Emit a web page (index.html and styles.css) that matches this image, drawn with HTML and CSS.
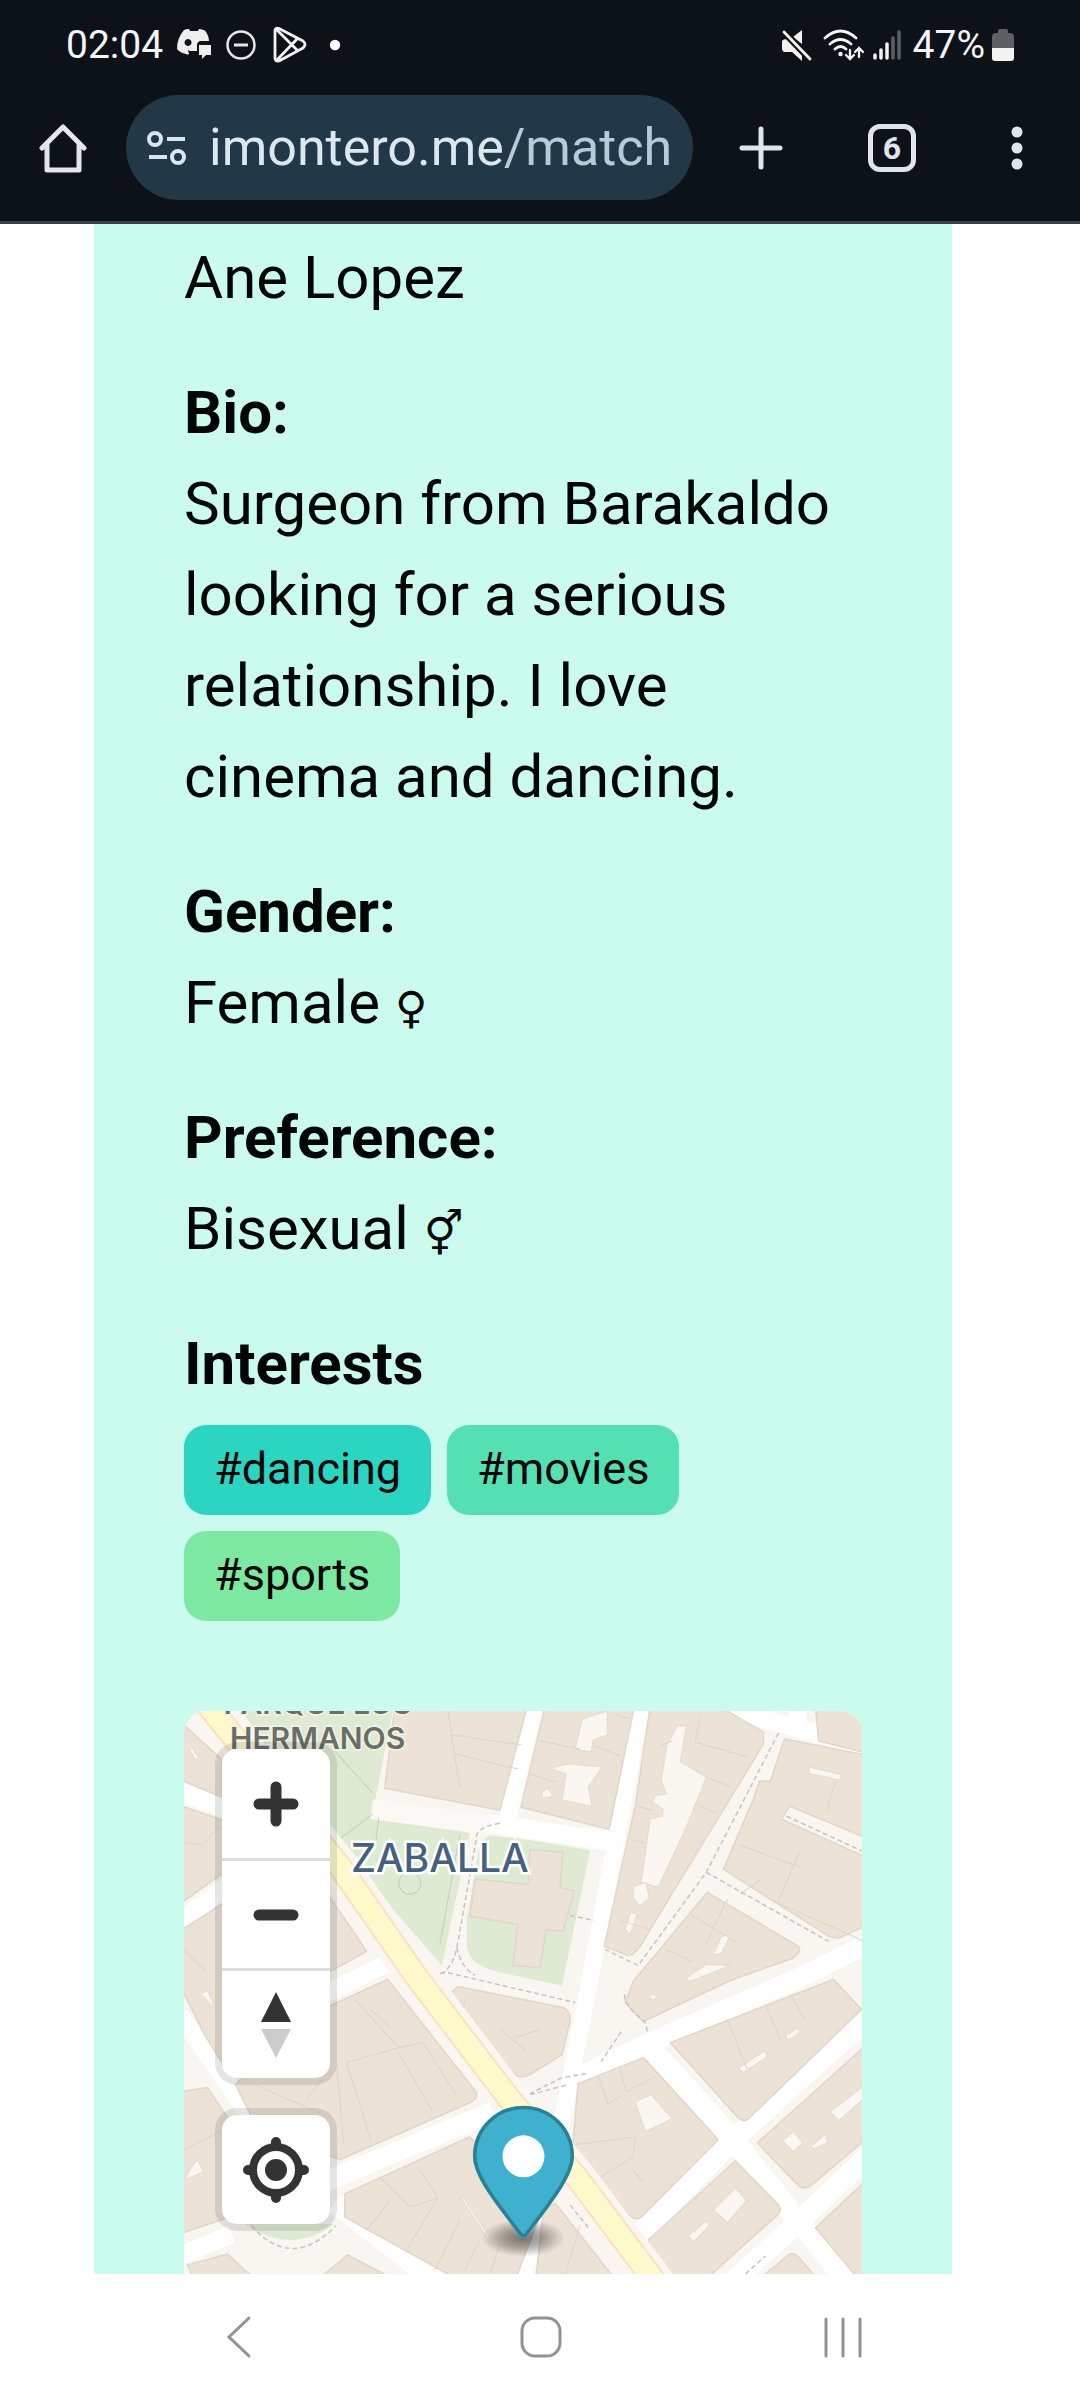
FILE: index.html
```html
<!DOCTYPE html>
<html lang="en">
<head>
<meta charset="utf-8">
<meta name="viewport" content="width=device-width, initial-scale=1">
<title>Match</title>
<link rel="stylesheet" href="styles.css">
</head>
<body>
<header class="chrome">
  <div class="status">
    <div class="status-group">
      <span class="clock">02:04</span>
      <svg width="36" height="36" viewBox="0 0 36 36"><path fill="#eee" fill-rule="evenodd" d="M8 3q3-1.500 5-1l1 2h8l1-2q3 0 6 1.500Q33 9 33 14h-9q-3 1-3 4v6h-7l-2-1 1 4q-1 1-3 0-6-1-9-5Q1 11 8 3zM12 12a3.500 3.500 0 1 0 .1 0z"/><path fill="#eee" d="M23 18h12v10h-5l-4 4v-4h-3z"/></svg>
      <svg width="32" height="32" viewBox="0 0 32 32" fill="none" stroke="#e6e6e6"><circle cx="16" cy="16" r="13.500" stroke-width="2.500"/><path d="M9 16h14" stroke-width="3"/></svg>
      <svg class="play" width="36" height="38" viewBox="0 0 36 38" fill="none" stroke="#f2f2f2" stroke-width="2.800" stroke-linejoin="round"><path d="M3 5q0-4 4-2.500L31 15q4 3 0 7L7 35q-4 1-4-3zM4 3l22 22M4 35l22-23"/></svg>
      <svg width="12" height="12" viewBox="0 0 12 12"><circle cx="6" cy="6" r="5.200" fill="#fff"/></svg>
    </div>
    <div class="status-group status-right">
      <svg width="32" height="34" viewBox="0 0 32 34"><path fill="#f4f0ee" d="M22 2v14L13 9zM2 13q1-2 5-2l15 14v8l-10-9H5q-3 0-3-4z"/><path d="M4 4l26 27" stroke="#0d1218" stroke-width="7"/><path d="M4 4l26 27" stroke="#f4f0ee" stroke-width="2.800" stroke-linecap="round"/></svg>
      <svg class="wifi" width="42" height="34" viewBox="0 0 42 34" fill="none" stroke="#f4f4f4" stroke-width="2.800" stroke-linecap="round"><path d="M2 10q15.500-14 31 0M7 16q10.500-9 21 0M12 21q5.500-5 11 0"/><circle cx="17.500" cy="26" r="2.200" fill="#f4f4f4" stroke="none"/><path d="M27 22v9m-4-4l4 4 4-4M36 29v-9m-4 4l4-4 4 4" stroke-width="2.300"/></svg>
      <svg class="signal" width="30" height="34" viewBox="0 0 30 34" stroke-width="3.500" stroke-linecap="round"><path d="M3 27v3M9 22v8M15 16v14" stroke="#f2f2f2"/><path d="M21 10v20M27 4v26" stroke="#5b5f62"/></svg>
      <span class="battery-text">47%</span>
      <svg width="22" height="34" viewBox="0 0 22 34"><path d="M6 3q0-2 2-2h6q2 0 2 2v2h2q4 0 4 4v11H0V9q0-4 4-4h2z" fill="#5c6063"/><path d="M0 20h22v10q0 3-3 3H3q-3 0-3-3z" fill="#f2f2f2"/></svg>
    </div>
  </div>
  <div class="toolbar">
    <button class="icon-btn" aria-label="Home"><svg width="48" height="50" viewBox="0 0 48 50" fill="none" stroke="#e4e6e9" stroke-width="5" stroke-linejoin="round" stroke-linecap="round"><path d="M3 25L24 4l21 21M8 22v25h32V22"/></svg></button>
    <button class="address" aria-label="imontero.me/match">
      <svg width="40" height="36" viewBox="0 0 40 36" fill="none" stroke="#d9e6ee" stroke-width="4"><circle cx="8" cy="9" r="6"/><path d="M20 9h18M2 27h18"/><circle cx="31" cy="27" r="6"/></svg>
      <span class="url"><span class="host">imontero.me</span>/match</span>
    </button>
    <button class="icon-btn new-tab" aria-label="New tab"><svg width="44" height="44" viewBox="0 0 44 44" stroke="#e0e5ea" stroke-width="5" stroke-linecap="round"><path d="M22 3v38M3 22h38"/></svg></button>
    <button class="tabs" aria-label="6 open tabs">6</button>
    <button class="icon-btn" aria-label="Menu"><svg width="12" height="46" viewBox="0 0 12 46" fill="#e0e5ea"><circle cx="6" cy="7" r="5.500"/><circle cx="6" cy="23" r="5.500"/><circle cx="6" cy="39" r="5.500"/></svg></button>
  </div>
</header>

<main class="profile">
  <p>Ane Lopez</p>
  <section><h2>Bio:</h2><p>Surgeon from Barakaldo looking for a serious relationship. I love cinema and dancing.</p></section>
  <section><h2>Gender:</h2><p>Female <span class="sign">♀</span></p></section>
  <section><h2>Preference:</h2><p>Bisexual <span class="sign">⚥</span></p></section>
  <section>
    <h2>Interests</h2>
    <ul class="tags">
      <li class="tag dancing">#dancing</li>
      <li class="tag movies">#movies</li>
      <li class="tag sports">#sports</li>
    </ul>
  </section>

  <div class="map">
    <svg class="tiles" viewBox="184 1712 678 562" preserveAspectRatio="xMidYMin slice" role="img" aria-label="Map of Zaballa">
      <defs>
        <radialGradient id="shade"><stop offset="0" stop-opacity=".5"/><stop offset=".5" stop-opacity=".3"/><stop offset="1" stop-opacity="0"/></radialGradient>
      </defs>
      <rect x="184" y="1712" width="678" height="562" fill="#f9f5f1"/>
      <!-- parks -->
      <g fill="#deebd2">
        <path d="M242 1712H393L373 1813 470 1834 442 1966 334 1842z"/>
        <path d="M496 1835L590 1851 562 1986 500 1973Q467 1965 467 1945V1920L478 1855Q482 1835 496 1835z"/>
        <path d="M245 2224h90q-45 32-90 0z"/>
      </g>
      <!-- streets -->
      <g fill="none" stroke="#fff" stroke-linejoin="round">
        <path d="M536 1700L508 1818M642 1700L588 1990 558 2140 520 2290" stroke-width="17"/>
        <path d="M372 1810L500 1827 614 1842" stroke="#fbf8f5" stroke-width="20"/>
        <path d="M490 1824L614 1843M700 1702L870 1750M797 1700v32" stroke-width="18"/>
        <path d="M325 2182L493 2112M575 2079L643 2046 793 1981 870 1943" stroke-width="20"/>
        <path d="M643 2040L733 2140 850 2286M870 2016L740 2133 636 2238M870 2154L800 2220 730 2284M335 2203L440 2284" stroke-width="21"/>
        <path d="M395 1960L325 1995M176 1790L225 1810M176 1925L230 1885M180 2015L250 2115M176 2258L232 2234" stroke-width="18"/>
      </g>
      <!-- buildings -->
      <g fill="#ece2d6" stroke="#e2d6ca" stroke-width="1.500" stroke-linejoin="round">
        <path d="M395 1708H527L500 1811 385 1789z"/>
        <path d="M545 1708H634L609 1830 521 1808z"/>
        <path d="M650 1708H720L763 1733V1745L650 1930Q635 1958 628 1956L604 1947 635 1807z"/>
        <path d="M815 1708H866V1754L818 1742z"/>
        <path d="M784 1740L866 1756V1839L789 1807 781 1820 866 1858V1926L840 1938Q832 1940 824 1934L723 1870 753 1800 759 1782H770z"/>
        <path d="M707 1893L798 1947Q802 1952 792 1959L730 1981 643 2022 625 2003 633 1982z"/>
        <path d="M670 2043L833 1980 861 2010 748 2119Q742 2124 735 2115z"/>
        <path d="M578 2084L643 2058 718 2140 641 2217Q636 2221 630 2216L572 2155z"/>
        <path d="M757 2143L866 2045V2139L810 2186Q803 2191 797 2185z"/>
        <path d="M735 2161L778 2205Q782 2211 776 2216L707 2278H665L648 2240z"/>
        <path d="M815 2228L866 2180V2278H857z"/>
        <path d="M760 2278L788 2255Q793 2252 798 2257L816 2278z"/>
        <path d="M555 2203L614 2278H536L543 2212z"/>
        <path d="M458 1987L563 2008Q571 2012 570 2022L562 2055 530 2075Q520 2080 512 2073L445 1998z"/>
        <path d="M300 2020L388 1980 476 2092Q479 2099 470 2103L340 2160 256 2125 236 2085z"/>
        <path d="M325 1890L367 1952 325 1975z"/>
        <path d="M345 2194L470 2137 540 2215 516 2278H455L345 2217z"/>
        <path d="M180 1722L222 1760V1798L180 1780z"/>
        <path d="M180 1806L226 1822V1872L180 1905z"/>
        <path d="M180 1932L230 1900V2075L205 2035 180 1985z"/>
        <path d="M180 2092L208 2088 228 2118V2218L180 2234z"/>
        <path d="M188 2265L228 2254 254 2278H194zM320 2278L348 2255 392 2278z"/>
        <path d="M530 1850L563 1853 560 1888 574 1892 563 1932 546 1930 540 1968 513 1966 518 1925 470 1917 475 1880 528 1885z"/>
      </g>
      <!-- courtyards -->
      <g fill="#faf7f2" stroke="#e5dacf">
        <path d="M582 1720L607 1712V1736L593 1741 591 1753 575 1750zM568 1765L602 1768 588 1788 592 1807 562 1801 566 1775 550 1769zM542 1793l6-4 5 8-11 2z"/>
        <path d="M677 1727H686L680 1763 706 1778 686 1828 658 1888 641 1883 650 1820 662 1817 663 1810 652 1803 655 1796 666 1795 661 1781 667 1745z"/>
        <path d="M634 1887l12-4 3 16-10 8-6-9zM630 1913l7 2-7 20-5-5z"/>
        <path d="M809 1768L842 1776 839 1781 808 1774zM713 1955l8-18 9-2-9 19-6 1zM685 1979L706 1965 730 1966 690 1982z"/>
        <path d="M738 2069L764 2051 767 2057 743 2073zM785 2036l12-7 3 4-13 8zM649 1997l4-3 4 4-4 3z"/>
        <path d="M635 2102L651 2095 672 2119 645 2132z"/>
        <path d="M782 2141L793 2132 802 2143 793 2152zM830 2112L862 2087V2100L838 2121zM810 2147l15-13 2 9-14 6z"/>
        <path d="M713 2210L735 2188 746 2201 727 2223zM688 2236L706 2221 709 2226 693 2242z"/>
        <path d="M461 2198l2-1 27 41-2 1zM190 2170l8-10 6 12-18 8zM202 1994l6-3 8 18M190 1750l3-1 6 10-3 2z"/>
      </g>
      <!-- parcel lines -->
      <g fill="none" stroke="#dfd4c8" stroke-width="1">
        <path d="M448 1712l12 78M452 1736l70 10M455 1755l63 15M540 1742l40 8M530 1775l26 8M615 1715l14 5M595 1747l25 10M636 1807l17 4M660 1747l12-5M700 1715l-5 28 52 15M706 1778l25 10M694 1804l22 10M630 1840l15 4M650 1930l-30-9"/>
        <path d="M799 1853l-22 50 89 40M740 1846l60 22M760 1880l-20 15M835 1782l-9 30M690 1915l45 27M727 1900l-22 45M666 1950l26 12M727 2020l20 50M765 2005l15 35M790 1995l14 25"/>
        <path d="M598 2077l10 27 15-9M620 2070l6 22 30-15M575 2145l60-8-2 20-45 28M633 2170l10 12"/>
        <path d="M355 2000l44 48 24-5 35 55M399 2048l-52 15 24 77M371 2010l20 18M398 2052l35 60M337 2065l7 80M255 2085l65 28M308 2098l14-18M380 2177l30 30 28-9-18-28M391 2200l-24 30M438 2198l-30 50M460 2220l-25 50M480 2240l-15 30M500 2245l-10 30"/>
        <path d="M184 1843l18 3 18-18M184 1950l22 22M184 2150l40-20M465 2000l-5 30M500 2030l25 20M540 2030l-25 8M580 2225l-15 50"/>
      </g>
      <g fill="none" stroke="#c9cbbd" stroke-width="1">
        <path d="M335 1752l38 42M373 1815l-40 30M379 1818l-3 25M460 1835l-20 110"/><circle cx="410" cy="1884" r="11"/>
      </g>
      <g fill="none" stroke="#c6c3c3" stroke-width="1.500" stroke-dasharray="5 3">
        <path d="M500 1824q-26 4-24 18L457 1948Q451 1975 435 1975L447 1973 575 2003M457 1948q4 20 18 28M778 1734L706 1873 638 1966 605 1950M706 1873L828 1942M786 1817L862 1852M570 1916l24 5M625 1995q-4 8 20 28l3 12M621 2032l-20 30M522 2098l40-20 25-4M530 2095l38-10M252 2226q40 45 84 0M570 2205l20 25M745 2274l20-18"/>
      </g>
      <!-- avenue -->
      <g fill="none" stroke-linejoin="round">
        <path d="M196 1690L213 1712 340 1867 417 1978 510 2100 577 2178 658 2286" stroke="#fcf6f1" stroke-width="38"/>
        <path d="M196 1690L213 1712 340 1867 417 1978 510 2100 577 2178 658 2286" stroke="#f9e2c0" stroke-width="25"/>
        <path d="M196 1690L213 1712 340 1867 417 1978 510 2100 577 2178 658 2286" stroke="#fff9cc" stroke-width="21"/>
      </g>
      <g class="park-name"><text x="318" y="1715">PARQUE LOS</text><text x="318" y="1750">HERMANOS</text></g>
      <text class="place-name" x="440" y="1873">ZABALLA</text>
      <!-- marker -->
      <ellipse cx="523" cy="2238" rx="42" ry="19" fill="url(#shade)"/>
      <g transform="translate(473 2106) scale(3.74)">
        <path fill="#3fb1ce" d="M27 13.500C27 19.070 20.250 27 14.750 34.500 14.020 35.500 12.980 35.500 12.250 34.500 6.750 27 0 19.220 0 13.500 0 6.040 6.040 0 13.500 0S27 6.040 27 13.500z"/>
        <path fill="none" stroke="#2d7f94" stroke-width=".9" d="M26.500 13.500C26.500 18.900 19.800 26.800 14.300 34.200 13.800 34.900 13.200 34.900 12.700 34.200 7.200 26.800.5 19.100.5 13.500.5 6.300 6.300.5 13.500.5S26.500 6.300 26.500 13.500z"/>
        <circle cx="13.500" cy="13.500" r="5.600" fill="#fff"/>
      </g>
    </svg>
    <div class="controls">
      <div class="control-group">
        <button aria-label="Zoom in"><svg width="46" height="46" viewBox="0 0 46 46" stroke="#333" stroke-width="11" stroke-linecap="round"><path d="M23 6v34M6 23h34"/></svg></button>
        <button aria-label="Zoom out"><svg width="46" height="46" viewBox="0 0 46 46" stroke="#333" stroke-width="11" stroke-linecap="round"><path d="M6 23h34"/></svg></button>
        <button aria-label="Reset bearing to north"><svg width="30" height="68" viewBox="0 0 30 68"><path fill="#333" d="M15 1l15 30H0z"/><path fill="#ccc" d="M0 38h30L15 67z"/></svg></button>
      </div>
      <div class="control-group">
        <button aria-label="Find my location"><svg width="66" height="66" viewBox="0 0 66 66" fill="none" stroke="#333"><circle cx="33" cy="33" r="23" stroke-width="8"/><circle cx="33" cy="33" r="11" fill="#333" stroke="none"/><path d="M33 5v4M33 57v4M5 33h4M57 33h4" stroke-width="10" stroke-linecap="round"/></svg></button>
      </div>
    </div>
  </div>
</main>

<nav class="system-nav">
  <button aria-label="Back"><svg width="26" height="44" viewBox="0 0 26 44" fill="none" stroke="#939393" stroke-width="3" stroke-linecap="round"><path d="M23 3L3 22l20 19"/></svg></button>
  <button aria-label="Home"><svg width="44" height="44" viewBox="0 0 44 44" fill="none" stroke="#939393" stroke-width="3"><rect x="3" y="3" width="38" height="38" rx="13"/></svg></button>
  <button aria-label="Recent apps"><svg width="40" height="44" viewBox="0 0 40 44" stroke="#939393" stroke-width="3" stroke-linecap="round"><path d="M3 4v37M20 4v37M37 4v37"/></svg></button>
</nav>
</body>
</html>
```
FILE: styles.css
```css
* { box-sizing: border-box; }
body {
  margin: 0;
  min-height: 100vh;
  display: flex;
  flex-direction: column;
  background: #fff;
  color: #010504;
  font-family: Roboto, "Liberation Sans", sans-serif;
}
button {
  display: flex;
  align-items: center;
  justify-content: center;
  padding: 0;
  border: 0;
  background: none;
  color: inherit;
  font: inherit;
}
svg { display: block; flex: none; }
h2, p, ul { margin: 0; padding: 0; font-size: inherit; }

/* browser chrome */
.chrome {
  background: #0d1218;
  border-bottom: 3px solid #3b4044;
  color: #f4f4f4;
}
.status {
  display: flex;
  align-items: center;
  justify-content: space-between;
  height: 90px;
  padding: 0 66px;
  font-size: 39px;
  line-height: 48px;
}
.status-group { display: flex; align-items: center; gap: 13px; }
.play { margin: 0 8px 0 2px; }
.status-right { gap: 7px; }
.signal { margin-right: 4px; }
.wifi { margin-left: 4px; }
.toolbar {
  display: flex;
  align-items: center;
  gap: 39px;
  padding: 5px 57px 21px 39px;
}
.address {
  flex: 1;
  justify-content: flex-start;
  gap: 22px;
  height: 105px;
  min-width: 0;
  padding: 0 21px;
  border-radius: 53px;
  background: #233846;
}
.url { color: #b7cad7; font-size: 52px; line-height: 64px; white-space: nowrap; }
.host { color: #dce8f0; }
.new-tab { margin: 0 46px 0 7px; }
.tabs {
  flex: none;
  width: 48px;
  height: 48px;
  margin-right: 56px;
  border: 5px solid #e0e5ea;
  border-radius: 12px;
  color: #e0e5ea;
  font-size: 32px;
  line-height: 36px;
  font-weight: 700;
}

/* profile */
.profile {
  flex: 1;
  display: flex;
  flex-direction: column;
  gap: 44px;
  margin: 0 128px 0 94px;
  padding: 8px 90px 0;
  background: #cbfbef;
  font-size: 60px;
  line-height: 91px;
}
.sign { font-family: "DejaVu Sans", sans-serif; font-size: 44px; line-height: 48px; }
.tags {
  display: flex;
  flex-wrap: wrap;
  gap: 16px;
  padding-top: 16px;
  list-style: none;
}
.tag {
  padding: 10px 30px 12px;
  border-radius: 22px;
  font-size: 45px;
  line-height: 68px;
}
.dancing { background: #2cd5c1; }
.movies { background: #54e0b2; }
.sports { background: #7de8a2; }

/* map */
.map {
  position: relative;
  flex: 1;
  min-height: 480px;
  margin-top: 46px;
  border-radius: 22px 22px 0 0;
  overflow: hidden;
}
.tiles { position: absolute; inset: 0; width: 100%; height: 100%; }
.park-name {
  fill: #6b6e66;
  stroke: #f2f4ea;
  stroke-width: 3px;
  paint-order: stroke;
  font: 600 30px Inter, sans-serif;
  text-anchor: middle;
}
.place-name {
  fill: #475f80;
  stroke: #fff;
  stroke-width: 5px;
  paint-order: stroke;
  font: 500 39px Inter, sans-serif;
  text-anchor: middle;
}
.controls {
  position: absolute;
  top: 38px;
  left: 38px;
  display: flex;
  flex-direction: column;
  gap: 37px;
}
.control-group {
  border-radius: 15px;
  background: #fff;
  box-shadow: 0 0 0 7px rgba(0, 0, 0, .1);
}
.control-group button { width: 108px; height: 109px; }
.control-group button + button { height: 110px; border-top: 3px solid #ddd; }

/* system navigation */
.system-nav {
  display: grid;
  grid-template-columns: repeat(3, 1fr);
  height: 126px;
  padding: 0 86px 0 88px;
  background: #fff;
}
```
